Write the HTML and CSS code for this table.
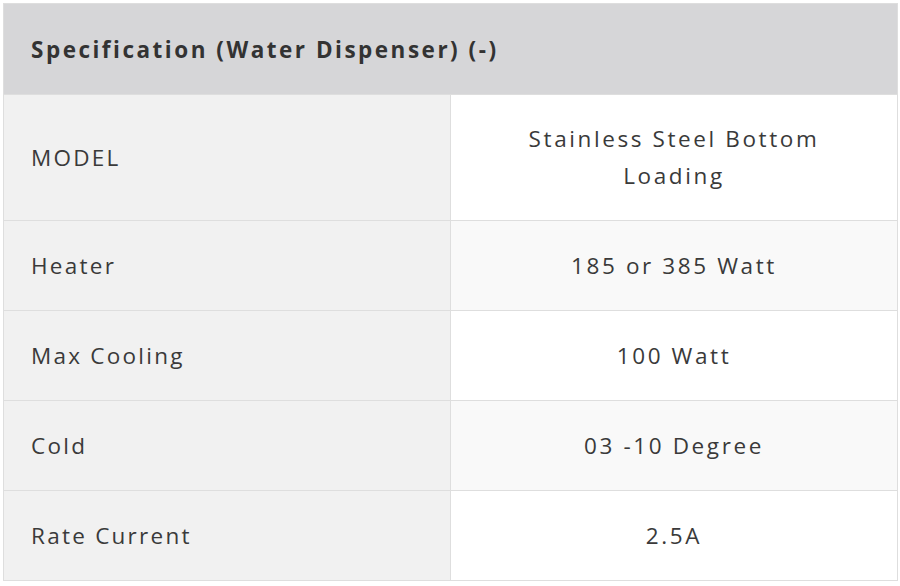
FILE: index.html
```html
<!DOCTYPE html>
<html>
<head>
<meta charset="utf-8">
<link rel="stylesheet" href="styles.css">
</head>
<body>
<div class="wrap">
<table class="spec">
  <thead>
    <tr><th colspan="2" class="title">Specification (Water Dispenser) (-)</th></tr>
  </thead>
  <tbody>
    <tr class="odd"><td class="label">MODEL</td><td class="value tall">Stainless Steel Bottom<br>Loading</td></tr>
    <tr class="even"><td class="label">Heater</td><td class="value">185 or 385 Watt</td></tr>
    <tr class="odd"><td class="label">Max Cooling</td><td class="value">100 Watt</td></tr>
    <tr class="even"><td class="label">Cold</td><td class="value">03 -10 Degree</td></tr>
    <tr class="odd"><td class="label">Rate Current</td><td class="value">2.5A</td></tr>
  </tbody>
</table>
</div>
</body>
</html>
```
FILE: styles.css
```css
html, body {
  margin: 0;
  padding: 0;
  background: #ffffff;
}
.wrap {
  padding: 3px 0 0 3px;
}
.spec {
  width: 895px;
  border-collapse: collapse;
  font-family: "Open Sans", "Noto Sans", sans-serif;
  color: #3a3a3a;
  table-layout: fixed;
}
.spec th, .spec td {
  border: 1px solid #dedede;
}
.title {
  background: #d6d6d8;
  text-align: left;
  font-size: 22.5px;
  font-weight: 700;
  letter-spacing: 2.5px;
  color: #333;
  height: 91px;
  padding: 0 0 0 27px;
  box-sizing: border-box;
  border-top: 2px solid #e6e6e6;
}
.label {
  width: 447px;
  background: #f1f1f1;
  font-size: 22.5px;
  letter-spacing: 2.25px;
  padding: 26px 27px;
  line-height: 37px;
  text-align: left;
}
.value {
  font-size: 22.5px;
  letter-spacing: 2.6px;
  padding: 26px 20px;
  line-height: 37px;
  text-align: center;
}
.value.tall {
  line-height: 36.5px;
}
.odd .value { background: #ffffff; }
.even .value { background: #f9f9f9; }
```
